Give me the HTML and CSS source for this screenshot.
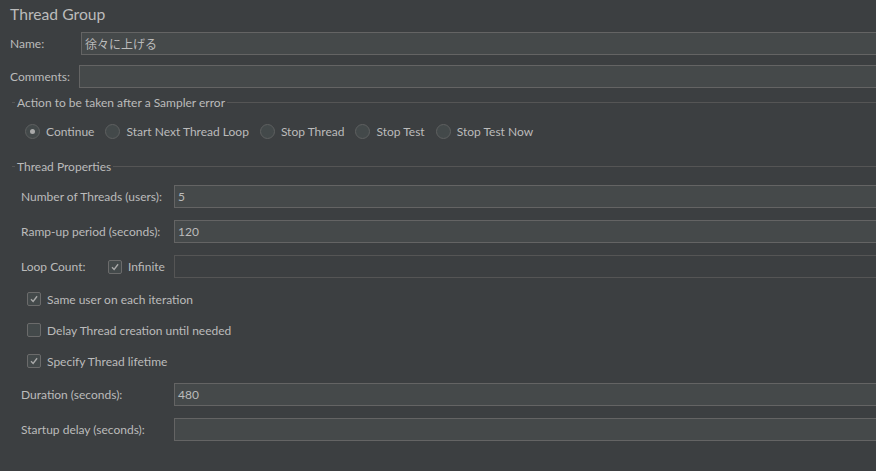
FILE: index.html
```html
<!DOCTYPE html>
<html>
<head>
<meta charset="utf-8">
<link rel="stylesheet" href="styles.css">
</head>
<body>
<div class="page">
  <div class="title">Thread Group</div>
  <div class="row name-row">
    <label class="lbl lbl-name">Name:</label>
    <div class="field">徐々に上げる</div>
  </div>
  <div class="row comments-row">
    <label class="lbl lbl-comments">Comments:</label>
    <div class="field"></div>
  </div>

  <div class="group group-action">
    <div class="legend"><span class="lead"></span><span class="legend-text">Action to be taken after a Sampler error</span><span class="rule"></span></div>
    <div class="radios">
      <div class="radio-item"><span class="radio checked"></span><span>Continue</span></div>
      <div class="radio-item"><span class="radio"></span><span>Start Next Thread Loop</span></div>
      <div class="radio-item"><span class="radio"></span><span>Stop Thread</span></div>
      <div class="radio-item"><span class="radio"></span><span>Stop Test</span></div>
      <div class="radio-item"><span class="radio"></span><span>Stop Test Now</span></div>
    </div>
  </div>

  <div class="group group-props">
    <div class="legend"><span class="lead"></span><span class="legend-text">Thread Properties</span><span class="rule"></span></div>
    <div class="props">
      <div class="row prop-row">
        <label class="lbl lbl-prop">Number of Threads (users):</label>
        <div class="field">5</div>
      </div>
      <div class="row prop-row">
        <label class="lbl lbl-prop">Ramp-up period (seconds):</label>
        <div class="field">120</div>
      </div>
      <div class="row prop-row">
        <label class="lbl lbl-loop">Loop Count:</label>
        <span class="check checked"><svg viewBox="0 0 14 14" width="14" height="14"><path d="M3.5 7.2 L6 9.8 L10.6 3.8" fill="none" stroke="#a9a9a9" stroke-width="1.6"/></svg></span>
        <span class="check-lbl infinite">Infinite</span>
        <div class="field disabled"></div>
      </div>
      <div class="check-row first-check">
        <span class="check checked"><svg viewBox="0 0 14 14" width="14" height="14"><path d="M3.5 7.2 L6 9.8 L10.6 3.8" fill="none" stroke="#a9a9a9" stroke-width="1.6"/></svg></span>
        <span class="check-lbl">Same user on each iteration</span>
      </div>
      <div class="check-row">
        <span class="check"></span>
        <span class="check-lbl">Delay Thread creation until needed</span>
      </div>
      <div class="check-row">
        <span class="check checked"><svg viewBox="0 0 14 14" width="14" height="14"><path d="M3.5 7.2 L6 9.8 L10.6 3.8" fill="none" stroke="#a9a9a9" stroke-width="1.6"/></svg></span>
        <span class="check-lbl">Specify Thread lifetime</span>
      </div>
      <div class="row prop-row duration">
        <label class="lbl lbl-prop">Duration (seconds):</label>
        <div class="field">480</div>
      </div>
      <div class="row prop-row">
        <label class="lbl lbl-prop">Startup delay (seconds):</label>
        <div class="field"></div>
      </div>
    </div>
  </div>
</div>
</body>
</html>
```

FILE: styles.css
```css
html, body {
  margin: 0;
  padding: 0;
  background: #3c3f41;
  overflow: hidden;
}
body {
  width: 876px;
  height: 471px;
  font-family: "Lato", "Noto Sans CJK JP", sans-serif;
  font-size: 12px;
  color: #bbbbbb;
  white-space: nowrap;
}
.page {
  padding-left: 10px;
}
.title {
  font-size: 15.7px;
  height: 28px;
  line-height: 28px;
  color: #bbbbbb;
}
.row {
  display: flex;
  align-items: center;
  height: 23px;
}
.name-row { margin-top: 4px; }
.comments-row { margin-top: 10px; }
.lbl { flex: none; }
.lbl-name { width: 71px; }
.lbl-comments { width: 69px; }
.field {
  flex: 1;
  height: 23px;
  box-sizing: border-box;
  background: #45494a;
  border: 1px solid #646464;
  border-right: none;
  padding-left: 3px;
  line-height: 21px;
}
.name-row .field {
  font-family: "Noto Sans CJK JP", sans-serif;
  font-size: 12px;
}
.field.disabled {
  background: #3c3f41;
  border-color: #555555;
}
.group-action { margin-top: 7px; }
.legend {
  display: flex;
  align-items: center;
  height: 14px;
}
.lead {
  width: 3px;
  margin-left: 2px;
  border-top: 1px solid #555555;
}
.legend-text {
  padding: 0 2px;
}
.rule {
  flex: 1;
  border-top: 1px solid #555555;
}
.radios {
  display: flex;
  align-items: center;
  margin-top: 14px;
  padding-left: 15px;
  height: 16px;
}
.radio-item {
  display: flex;
  align-items: center;
  margin-right: 11px;
}
.radio {
  width: 13px;
  height: 13px;
  border: 1px solid #5e6060;
  border-radius: 50%;
  background: #43494a;
  margin-right: 6px;
  position: relative;
  flex: none;
}
.radio.checked::after {
  content: "";
  position: absolute;
  left: 4px;
  top: 4px;
  width: 5px;
  height: 5px;
  border-radius: 50%;
  background: #a9a9a9;
}
.group-props { margin-top: 20px; }
.props {
  padding-left: 11px;
}
.prop-row { margin-top: 12px; }
.lbl-prop { width: 153px; }
.lbl-loop { width: 87px; }
.check {
  width: 12px;
  height: 12px;
  border: 1px solid #6b6b6b;
  border-radius: 2px;
  background: #43494a;
  flex: none;
  display: flex;
  align-items: center;
  justify-content: center;
  margin-right: 6px;
}
.check svg { display: block; }
.infinite { width: 46px; }
.check-row {
  display: flex;
  align-items: center;
  height: 16px;
  margin-top: 15px;
  padding-left: 6px;
}
.check-row.first-check { margin-top: 13px; }
.duration { margin-top: 14px; }
```
